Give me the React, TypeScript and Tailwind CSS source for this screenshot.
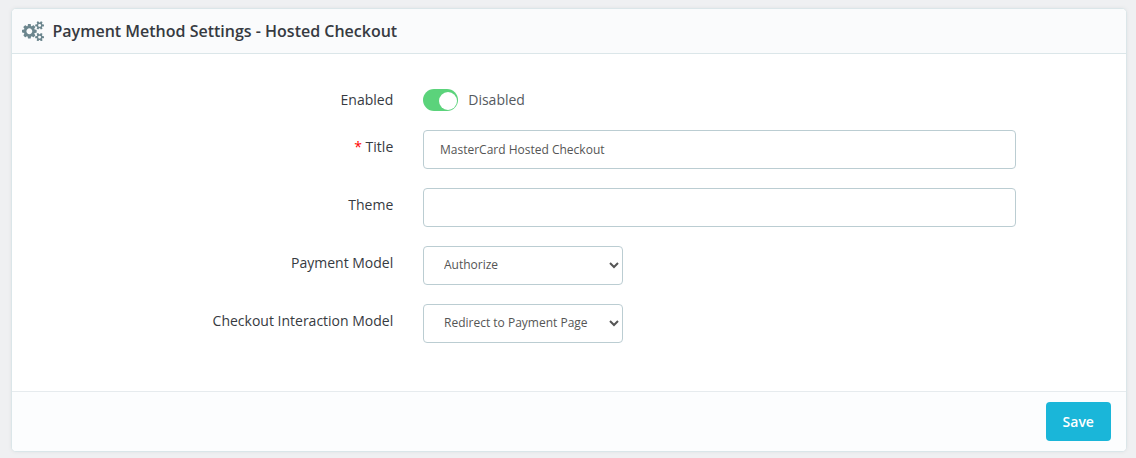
import type { ReactNode } from "react";

function CogsIcon() {
  return (
    <svg viewBox="0 0 1920 1792" className="h-[20.5px] w-[22px] shrink-0 fill-[#6c868e]" aria-hidden="true">
      <path d="M896 896q0-106-75-181t-181-75-181 75-75 181 75 181 181 75 181-75 75-181zm768 512q0-52-38-90t-90-38-90 38-38 90q0 53 37.5 90.5t90.5 37.5 90.5-37.5 37.5-90.5zm0-1024q0-52-38-90t-90-38-90 38-38 90q0 53 37.5 90.5t90.5 37.5 90.5-37.5 37.5-90.5zm-384 421v185q0 10-7 19.5t-16 10.5l-155 24q-11 35-32 76 34 48 90 115 7 11 7 20 0 12-7 19-23 30-82.5 89.5t-78.500 59.500q-11 0-21-7l-115-90q-37 19-77 31-11 108-23 155-7 24-30 24h-186q-11 0-20-7.500t-10-17.500l-23-153q-34-10-75-31l-118 89q-7 7-20 7-11 0-21-8-144-133-144-160 0-9 7-19 10-14 41-53t47-61q-23-44-35-82l-152-24q-10-1-17-9.500t-7-19.500v-185q0-10 7-19.500t16-10.500l155-24q11-35 32-76-34-48-90-115-7-11-7-20 0-12 7-20 22-30 82-89t79-59q11 0 21 7l115 90q34-18 77-32 11-108 23-154 7-24 30-24h186q11 0 20 7.500t10 17.500l23 153q34 10 75 31l118-89q8-7 20-7 11 0 21 8 144 133 144 160 0 8-7 19-12 16-42 54t-45 60q23 48 34 82l152 23q10 2 17 10.500t7 19.500zm640 533v140q0 16-149 31-12 27-30 52 51 113 51 138 0 4-4 7-122 71-124 71-8 0-46-47t-52-68q-20 2-30 2t-30-2q-14 21-52 68t-46 47q-2 0-124-71-4-3-4-7 0-25 51-138-18-25-30-52-149-15-149-31v-140q0-16 149-31 13-29 30-52-51-113-51-138 0-4 4-7 4-2 35-20t59-34 30-16q8 0 46 46.500t52 67.500q20-2 30-2t30 2q51-71 92-112l6-2q4 0 124 70 4 3 4 7 0 25-51 138 17 23 30 52 149 15 149 31zm0-1024v140q0 16-149 31-12 27-30 52 51 113 51 138 0 4-4 7-122 71-124 71-8 0-46-47t-52-68q-20 2-30 2t-30-2q-14 21-52 68t-46 47q-2 0-124-71-4-3-4-7 0-25 51-138-18-25-30-52-149-15-149-31v-140q0-16 149-31 13-29 30-52-51-113-51-138 0-4 4-7 4-2 35-20t59-34 30-16q8 0 46 46.500t52 67.500q20-2 30-2t30 2q51-71 92-112l6-2q4 0 124 70 4 3 4 7 0 25-51 138 17 23 30 52 149 15 149 31z" />
    </svg>
  );
}

function Row({ label, required, children }: { label: string; required?: boolean; children: ReactNode }) {
  return (
    <div className="flex h-[39px] items-start">
      <div className="mr-[29.75px] w-[381.25px] pt-[6px] text-right text-sm leading-[21px] text-[#363a41]">
        {required && <span className="text-[#ff0000]">* </span>}
        {label}
      </div>
      {children}
    </div>
  );
}

const field =
  "h-[39px] rounded-[4px] border border-[#bbcdd2] bg-white text-xs text-[#555555] outline-none";

export default function App() {
  return (
    <div className="h-[458px] bg-[#eff0f2] px-[11px] pt-2 font-['Open_Sans',sans-serif]">
      <div className="flex h-[444px] w-[1116px] flex-col rounded-[5px] border border-[#dbe6e9] bg-white shadow-[0_0_4px_0_rgba(0,0,0,0.06)]">
        <header className="flex h-[45px] shrink-0 items-center gap-[8.5px] rounded-t-[4px] border-b border-[#dbe6e9] bg-[#fafbfc] pl-[10px]">
          <CogsIcon />
          <h3 className="text-base font-semibold leading-6 text-[#363a41]">
            Payment Method Settings - Hosted Checkout
          </h3>
        </header>

        <div className="flex grow flex-col">
          <div className="mt-[35px] mb-5 flex h-[21px] items-start">
            <div className="mr-[29.75px] w-[381.25px] text-right text-sm leading-[21px] text-[#363a41]">Enabled</div>
            <button role="switch" aria-checked="true" className="flex h-[22px] w-[35px] items-start justify-end rounded-full bg-[#5bd37b] pt-[3px] pr-px">
              <span className="size-[18px] rounded-full bg-white" />
            </button>
            <span className="ml-[10.25px] text-sm leading-[21px] text-[#555a5f]">Disabled</span>
          </div>
          <div className="flex flex-col gap-[19px]">
            <Row label="Title" required>
              <input className={`${field} w-[593px] px-4`} defaultValue="MasterCard Hosted Checkout" />
            </Row>
            <Row label="Theme">
              <input className={`${field} w-[593px] px-4`} />
            </Row>
            <Row label="Payment Model">
              <select className={`${field} w-[200px] pb-[2px] pl-4`}>
                <option>Authorize</option>
              </select>
            </Row>
            <Row label="Checkout Interaction Model">
              <select className={`${field} w-[200px] pb-[2px] pl-4`}>
                <option>Redirect to Payment Page</option>
              </select>
            </Row>
          </div>
        </div>

        <footer className="flex h-[60px] shrink-0 items-start justify-end rounded-b-[4px] border-t border-[#e6ebee] bg-[#fcfdfe] pt-[10px] pr-[15px]">
          <button className="h-[39px] w-[65px] rounded-[4px] bg-[#1ab6d9] pr-[0.5px] text-sm font-semibold text-white">Save</button>
        </footer>
      </div>
    </div>
  );
}
